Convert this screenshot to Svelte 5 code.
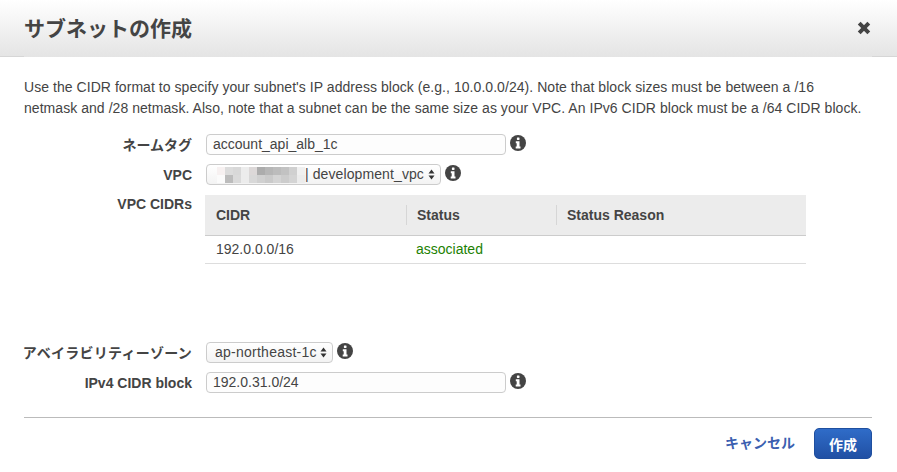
<script>
  const blur = [
    '#f7f1f1','#dcdcdc','#d8d8d8','#ececec','#dcd8d8','#acacac','#b6b6b6','#bcbcbc','#c2c2c2','#d0d0d0','#f0f0f0',
    '#fbfbfb','#bcbcbc','#dadada','#ececec','#d8d8d8','#d0d0d0','#cacaca','#d4d4d4','#cccccc','#d4d4d4','#ececec'
  ];
</script>

{#snippet info()}
  <svg class="info" viewBox="0 0 16 16" aria-hidden="true">
    <circle cx="8" cy="8" r="8" fill="#444" />
    <rect x="6.9" y="2.6" width="2.6" height="2.4" rx=".4" fill="#fff" />
    <path d="M5.8 6.3h3.7v5.2h1v1.9H5.7v-1.9h1V8.2H5.8z" fill="#fff" />
  </svg>
{/snippet}

{#snippet arrows()}
  <svg class="arrows" viewBox="0 0 7 11" aria-hidden="true">
    <path d="M3.5 0.5 6.5 4.5H.5zM3.5 10.5 .5 6.5h6z" fill="#333" />
  </svg>
{/snippet}

<div class="modal">
  <header class="head">
    <h1>サブネットの作成</h1>
    <svg class="close" viewBox="0 0 14 14" aria-label="閉じる">
      <path d="M2.2 2.2l9.6 9.6M11.8 2.2l-9.6 9.6" stroke="#444" stroke-width="4" />
    </svg>
  </header>

  <div class="body">
    <p class="note">Use the CIDR format to specify your subnet's IP address block (e.g., 10.0.0.0/24). Note that block sizes must be between a /16 netmask and /28 netmask. Also, note that a subnet can be the same size as your VPC. An IPv6 CIDR block must be a /64 CIDR block.</p>

    <div class="form">
      <div class="row">
        <span class="label jp">ネームタグ</span>
        <div class="field wide">account_api_alb_1c</div>
        {@render info()}
      </div>
      <div class="row">
        <span class="label">VPC</span>
        <div class="field select vpc">
          <div class="blur">
            {#each blur as c}<i style:background={c}></i>{/each}
          </div>
          <span class="vpc-name">| development_vpc</span>
          {@render arrows()}
        </div>
        {@render info()}
      </div>
      <div class="row top">
        <span class="label">VPC CIDRs</span>
        <div class="table">
          <div class="thead">
            <div class="th">CIDR</div>
            <div class="th">Status</div>
            <div class="th">Status Reason</div>
          </div>
          <div class="tbody">
            <div class="td">192.0.0.0/16</div>
            <div class="td ok">associated</div>
            <div class="td"></div>
          </div>
        </div>
      </div>
      <div class="row zone">
        <span class="label jp zone-label">アベイラビリティーゾーン</span>
        <div class="field select">
          <span class="zone-name">ap-northeast-1c</span>
          {@render arrows()}
        </div>
        {@render info()}
      </div>
      <div class="row">
        <span class="label">IPv4 CIDR block</span>
        <div class="field wide">192.0.31.0/24</div>
        {@render info()}
      </div>
    </div>

    <div class="foot">
      <a class="cancel" href="#cancel">キャンセル</a>
      <button class="primary">作成</button>
    </div>
  </div>
</div>

<style>
  :global(body) { background: #fff; }
  .modal {
    width: 897px; height: 472px; overflow: hidden; color: #444;
    font-family: "Liberation Sans", "Noto Sans CJK JP", sans-serif; font-size: 14px;
  }
  .head {
    height: 57px; box-sizing: border-box; padding: 0 26px 2px 24px;
    display: flex; align-items: center; justify-content: space-between;
    background:
      linear-gradient(#d6d6d6, #d6d6d6) left bottom / 24px 1px no-repeat,
      linear-gradient(#d6d6d6, #d6d6d6) right bottom / 25px 1px no-repeat,
      linear-gradient(#fff, #e4e4e4);
  }
  h1 { margin: 0 0 2px; font-size: 21px; font-weight: 700; color: #444; }
  .close { width: 14px; height: 14px; }
  .body { padding: 20px 25px 0 24px; }
  .note { margin: 0; line-height: 21px; width: 840px; letter-spacing: 0.05px; }
  .form { margin-top: 15px; display: flex; flex-direction: column; }
  .row { display: flex; align-items: center; gap: 4px; height: 21px; margin-bottom: 9px; }
  .row.top { align-items: flex-start; height: auto; margin-bottom: 78px; margin-top: 1px; }
  .label {
    width: 168px; margin-right: 10px; text-align: right; font-weight: 700; flex: none;
    white-space: nowrap;
  }
  .label.jp { margin-top: -2px; }
  .zone-label { letter-spacing: 0.25px; width: 172px; margin-left: -4px; }
  .top .label { padding-top: 1px; }
  .field {
    box-sizing: border-box; height: 21px; border: 1px solid #ccc; border-radius: 4px;
    padding: 0 6px; line-height: 19px; background: #fdfdfd; color: #444; flex: none;
    white-space: nowrap;
  }
  .wide { width: 300px; }
  .select {
    display: flex; align-items: center; gap: 2px; padding-right: 5px; padding-left: 8px;
    background: linear-gradient(#fff, #f3f3f3);
    width: 127px; justify-content: space-between;
  }
  .vpc { padding-left: 1px; gap: 0; width: 235px; justify-content: flex-start; }
  .vpc .arrows { margin-left: auto; }
  .vpc-name { letter-spacing: 0.1px; }
  .zone-name { letter-spacing: 0.25px; }
  .blur { display: grid; grid-template-columns: repeat(11, 8px); grid-auto-rows: 8px; width: 88px; margin-left: 9px; }
  .blur i { display: block; }
  .arrows { width: 7px; height: 11px; flex: none; }
  .info { width: 16px; height: 16px; flex: none; margin-top: -3px; }
  .table { width: 601px; margin-left: -1px; }
  .thead, .tbody { display: grid; grid-template-columns: 201px 150px 250px; }
  .thead { height: 41px; background: #ececec; align-items: center; border-bottom: 1px solid #ccc; box-sizing: border-box; }
  .th { font-weight: 700; padding-left: 11px; line-height: 20px; }
  .th + .th { border-left: 1px solid #d6d6d6; padding-left: 10px; }
  .tbody { height: 28px; box-sizing: border-box; align-items: center; border-bottom: 1px solid #ddd; padding-bottom: 2px; }
  .td { padding-left: 11px; }
  .td + .td { padding-left: 10px; }
  .ok { color: #1d8102; }
  .foot {
    margin-top: 15px; height: 41px; border-top: 1px solid #bbb;
    display: flex; justify-content: flex-end; align-items: flex-end; gap: 19px;
  }
  .cancel { color: #3b5fb0; font-weight: 700; text-decoration: none; margin-bottom: 7px; }
  .primary {
    width: 58px; height: 31px; border: 1px solid #1f4f9f; border-radius: 5px; color: #fff; padding: 0;
    font: 700 14px "Liberation Sans", "Noto Sans CJK JP", sans-serif;
    background: linear-gradient(#2f6cc8, #2150a4);
  }
</style>
